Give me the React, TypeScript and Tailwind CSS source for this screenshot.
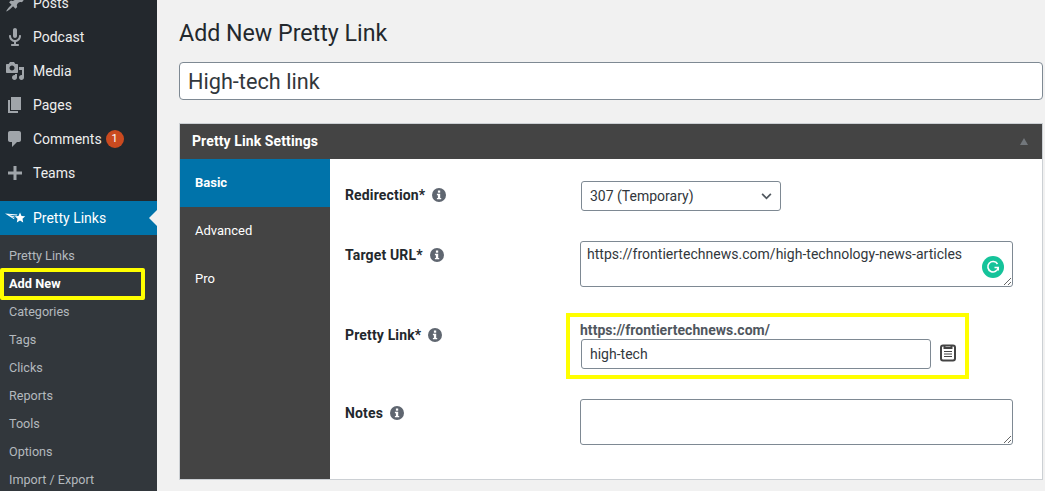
import type { ReactNode } from "react";

const font = { fontFamily: "Roboto, sans-serif" };

function PinIcon() {
  return (
    <svg viewBox="0 0 20 20" className="w-5 h-5 fill-[#a0a5aa]">
      <path d="M10.44 3.02l1.82-1.82 6.36 6.35-1.83 1.82c-1.05-.68-2.48-.57-3.41.36l-.75.75c-.92.93-1.04 2.35-.35 3.41l-1.83 1.82-2.41-2.41-2.8 2.79c-.42.42-3.38 2.71-3.8 2.29s1.86-3.39 2.28-3.81l2.79-2.79L4.1 9.36l1.83-1.82c1.05.69 2.48.57 3.4-.36l.75-.75c.93-.92 1.05-2.35.36-3.41z" />
    </svg>
  );
}

function MicIcon() {
  return (
    <svg viewBox="0 0 20 20" className="w-5 h-5 fill-[#a0a5aa]">
      <path d="M12 9V3c0-1.1-.89-2-2-2-1.12 0-2 .94-2 2v6c0 1.1.9 2 2 2 1.13 0 2-.94 2-2zm4 0c0 2.97-2.16 5.43-5 5.91V17h2c.56 0 1 .45 1 1s-.44 1-1 1H7c-.55 0-1-.45-1-1s.45-1 1-1h2v-2.09C6.17 14.43 4 11.97 4 9c0-.55.45-1 1-1 .56 0 1 .45 1 1 0 2.21 1.8 4 4 4 2.21 0 4-1.79 4-4 0-.55.45-1 1-1 .56 0 1 .45 1 1z" />
    </svg>
  );
}

function MediaIcon() {
  return (
    <svg viewBox="0 0 20 20" className="w-5 h-5 fill-[#a0a5aa]">
      <path d="M13 11V4c0-.55-.45-1-1-1h-1.67L9 1H5L3.67 3H2c-.55 0-1 .45-1 1v7c0 .55.45 1 1 1h10c.55 0 1-.45 1-1zM7 4.5c1.38 0 2.5 1.12 2.5 2.5S8.38 9.5 7 9.5 4.5 8.38 4.5 7 5.62 4.5 7 4.5zM14 6h5v10.5c0 1.38-1.12 2.5-2.5 2.5S14 17.88 14 16.5s1.12-2.5 2.5-2.5c.17 0 .34.02.5.05V9h-3V6zm-4 8.05V13h2v3.5c0 1.38-1.12 2.5-2.5 2.5S7 17.88 7 16.5 8.12 14 9.5 14c.17 0 .34.02.5.05z" />
    </svg>
  );
}

function PagesIcon() {
  return (
    <svg viewBox="0 0 20 20" className="w-5 h-5 fill-[#a0a5aa]">
      <path d="M6 15V2h10v13H6zm-1 1h8v2H3V5h2v11z" />
    </svg>
  );
}

function CommentIcon() {
  return (
    <svg viewBox="0 0 20 20" className="w-5 h-5 fill-[#a0a5aa]">
      <path d="M5 2h9c1.1 0 2 .9 2 2v7c0 1.1-.9 2-2 2h-2l-5 5v-5H5c-1.1 0-2-.9-2-2V4c0-1.1.9-2 2-2z" />
    </svg>
  );
}

function PlusIcon() {
  return (
    <svg viewBox="0 0 20 20" className="w-5 h-5 fill-[#a0a5aa]">
      <path d="M17 8.500v3h-5.500V17h-3v-5.500H3v-3h5.500V3h3v5.500z" />
    </svg>
  );
}

function StarLogo() {
  return (
    <svg viewBox="0 0 21 12" className="w-[21px] h-3 fill-white">
      <path d="M15 .5l1.500 3.400 3.700.4-2.700 2.500.7 3.650L15 8.600l-3.200 1.850.7-3.650-2.700-2.500 3.700-.4z" />
      <path d="M0 1.500l12.500 1-.7 1.100-8.200-.9 5.800 1.700.3 1.100-3.500-1 3.100 1.800-.2 1z" />
    </svg>
  );
}

function InfoIcon() {
  return (
    <svg viewBox="0 0 14 14" className="w-[14px] h-[14px] shrink-0">
      <circle cx="7" cy="7" r="7" fill="#5f6670" />
      <rect x="5.900" y="2.500" width="2.300" height="2.200" fill="#fff" />
      <path d="M4.900 5.800h3.300v4.100h1v1.400H4.900V9.900h1V7.200h-1z" fill="#fff" />
    </svg>
  );
}

function MenuItem({ icon, label, badge }: { icon: ReactNode; label: string; badge?: string }) {
  return (
    <div className="h-[34px] flex items-center text-[14px] text-[#eeeeee]">
      <span className="w-[33px] pl-[5px] flex items-center">{icon}</span>
      <span>{label}</span>
      {badge && (
        <span className="ml-[4px] w-[18px] h-[18px] rounded-full bg-[#ca4a1f] text-white text-[11px] flex items-center justify-center">
          {badge}
        </span>
      )}
    </div>
  );
}

function Sidebar() {
  const subItems = ["Categories", "Tags", "Clicks", "Reports", "Tools", "Options", "Import / Export"];
  return (
    <aside className="w-[157px] shrink-0 bg-[#23282d] h-full overflow-hidden">
      <div className="-mt-[14px]">
        <MenuItem icon={<PinIcon />} label="Posts" />
        <MenuItem icon={<MicIcon />} label="Podcast" />
        <MenuItem icon={<MediaIcon />} label="Media" />
        <MenuItem icon={<PagesIcon />} label="Pages" />
        <MenuItem icon={<CommentIcon />} label="Comments" badge="1" />
        <MenuItem icon={<PlusIcon />} label="Teams" />
      </div>
      <div className="relative mt-[11px] h-[34px] bg-[#0073aa] flex items-center text-[14px] text-white">
        <span className="w-[33px] pl-[5px] flex items-center"><StarLogo /></span>
        <span>Pretty Links</span>
        <span className="absolute right-0 top-[9px] border-y-[8px] border-r-[8px] border-y-transparent border-r-[#f1f1f1]" />
      </div>
      <div className="bg-[#32373c] h-[300px] pt-[7px] text-[12.6px] text-[#b4b9be]">
        <div className="h-[28px] pl-[9px] flex items-center">Pretty Links</div>
        <div className="h-[32px] -my-[2px] w-[145px] pl-[5px] flex items-center border-4 border-[#ffff00] rounded-[2px] font-bold text-[12.8px] text-white relative">
          Add New
        </div>
        {subItems.map((item) => (
          <div key={item} className="h-[28px] pl-[9px] flex items-center">{item}</div>
        ))}
      </div>
    </aside>
  );
}

function Label({ text }: { text: string }) {
  return (
    <div className="w-[235px] shrink-0 flex items-center gap-[7px] text-[14px] font-bold tracking-[0.15px] text-[#23282d] h-[20px]">
      <span>{text}</span>
      <InfoIcon />
    </div>
  );
}

function PrettyLinkSettings() {
  return (
    <section className="mt-[23px] border border-[#ccd0d4] bg-white h-[357px] flex flex-col">
      <header className="h-[35px] shrink-0 bg-[#444444] flex items-center justify-between pl-[12px] pr-[14px]">
        <h2 className="text-[14px] font-bold tracking-[0.1px] text-white">Pretty Link Settings</h2>
        <span className="border-x-[4px] border-b-[7px] border-x-transparent border-b-[#72777c]" />
      </header>
      <div className="flex flex-1">
        <nav className="w-[150px] shrink-0 bg-[#444444] text-[13px] text-white">
          <div className="h-[48px] bg-[#0073aa] pl-[15px] flex items-center font-bold">Basic</div>
          <div className="h-[48px] pl-[15px] flex items-center">Advanced</div>
          <div className="h-[48px] pl-[15px] flex items-center">Pro</div>
        </nav>
        <div className="flex-1 pl-[15px] pt-[22px] text-[#32373c]">
          <div className="flex items-center h-[30px]">
            <div className="pb-[2px]"><Label text="Redirection*" /></div>
            <div className="relative w-[200px] h-[30px] ml-[1px]">
              <select
                defaultValue="307"
                className="w-full h-full appearance-none border border-[#7e8993] rounded-[3px] bg-white pl-[8px] text-[14px] text-[#32373c]"
              >
                <option value="307">307 (Temporary)</option>
              </select>
              <svg viewBox="0 0 12 8" className="absolute right-[9px] top-[12px] w-[11px] h-[7px] fill-none stroke-[#50575e] stroke-2">
                <path d="M1 1l5 5 5-5" />
              </svg>
            </div>
          </div>
          <div className="flex mt-[30px]">
            <div className="pt-[4px]"><Label text="Target URL*" /></div>
            <div className="relative">
              <textarea
                defaultValue="https://frontiertechnews.com/high-technology-news-articles"
                className="block w-[433px] h-[46px] border border-[#7e8993] rounded-[3px] bg-white px-[6px] py-[2px] text-[14px] tracking-[0.02px] leading-[20px] text-[#32373c]"
              />
              <span className="absolute right-[9px] top-[15px] w-[22px] h-[22px] rounded-full bg-[#15c39a] flex items-center justify-center">
                <svg viewBox="0 0 14 14" className="w-[14px] h-[14px] fill-none stroke-white stroke-[1.600]">
                  <path d="M11.500 4A5.200 5.200 0 1 0 12.200 7.500H8.500M12.200 7.500v3" />
                </svg>
              </span>
            </div>
          </div>
          <div className="flex mt-[26px]">
            <div className="pt-[12px]"><Label text="Pretty Link*" /></div>
            <div className="-ml-[14px] w-[403px] h-[66px] border-4 border-[#ffff00] pl-[11px] pt-[5px]">
              <div className="text-[14px] font-bold tracking-[0.03px] text-[#50575e] leading-[16px] -ml-[1px]">https://frontiertechnews.com/</div>
              <div className="flex items-center mt-[1px]">
                <input
                  defaultValue="high-tech"
                  className="w-[350px] h-[30px] border border-[#7e8993] rounded-[3px] bg-white px-[8px] text-[14px] text-[#32373c]"
                />
                <svg viewBox="0 0 16 18" className="ml-[9px] -mt-[2px] w-[16px] h-[18px] fill-none stroke-[#444444] stroke-2">
                  <rect x="1" y="1.500" width="14" height="15" rx="2" />
                  <path d="M4.500 1.500v2.500h7V1.500" />
                  <path d="M4 7.500h8M4 10h8M4 12.500h8" className="stroke-1" />
                </svg>
              </div>
            </div>
          </div>
          <div className="flex mt-[20px]">
            <div className="pt-[4px]"><Label text="Notes" /></div>
            <textarea className="block w-[433px] h-[46px] border border-[#7e8993] rounded-[3px] bg-white" />
          </div>
        </div>
      </div>
    </section>
  );
}

export default function App() {
  return (
    <div className="w-[1045px] h-[491px] overflow-hidden flex bg-[#f1f1f1]" style={font}>
      <Sidebar />
      <main className="flex-1 pl-[22px] pr-[2px] pt-[19px]">
        <h1 className="text-[23.2px] leading-[29px] text-[#23282d]">Add New Pretty Link</h1>
        <input
          defaultValue="High-tech link"
          className="block mt-[14px] w-full h-[38px] border border-[#7e8993] rounded-[4px] bg-white px-[8px] text-[21.7px] text-[#32373c]"
        />
        <PrettyLinkSettings />
      </main>
    </div>
  );
}
